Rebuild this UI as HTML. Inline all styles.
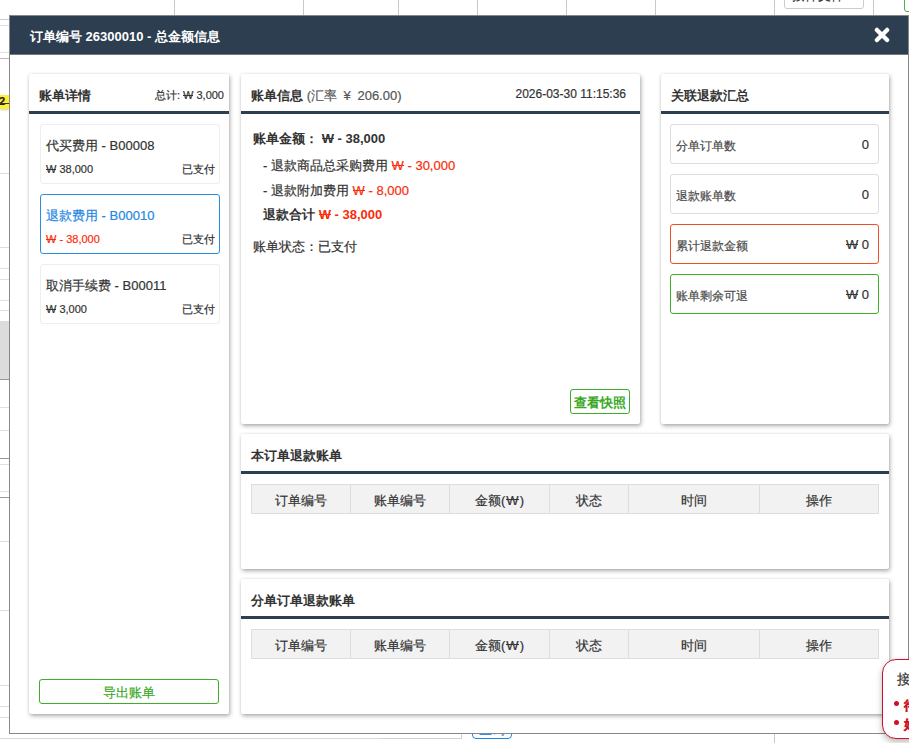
<!DOCTYPE html>
<html><head><meta charset="utf-8">
<style>
*{box-sizing:border-box;margin:0;padding:0}
html,body{width:909px;height:743px;overflow:hidden;background:#fff;font-family:"Liberation Sans",sans-serif;color:#333}
body{-webkit-text-stroke:0.2px currentColor}
b,#mtitle,.ctitle,.bold{-webkit-text-stroke:0}
.ctitle span{-webkit-text-stroke:0.2px currentColor}
.abs{position:absolute}
.vl{position:absolute;top:0;width:1px;background:#c8c8c8}
.hl{position:absolute;left:0;height:1px;background:#d8d8d8}
#modal{position:absolute;left:9px;top:15px;width:900px;height:719px;border:1px solid #888;background:#fff}
#mhead{position:absolute;left:0;top:0;width:898px;height:39px;background:#2c3e50;border-bottom:1px solid #777}
#mtitle{position:absolute;left:20px;top:13px;font-size:13px;font-weight:bold;color:#fff;line-height:16px;white-space:nowrap}
.card{position:absolute;background:#fff;border-radius:2px;box-shadow:1px 2px 4px rgba(0,0,0,.32),0 0 3px rgba(0,0,0,.08)}
.chead{position:absolute;left:0;top:0;right:0;height:40px;border-bottom:3px solid #2c3e50}
.ctitle{position:absolute;left:10px;top:14px;font-size:13px;font-weight:bold;color:#333;line-height:16px;white-space:nowrap}
.item{position:absolute;left:11px;width:180px;height:60px;border:1px solid #eee;border-radius:3px}
.item .n{position:absolute;left:5px;top:13px;font-size:13px;line-height:16px;color:#333;white-space:nowrap}
.item .a{position:absolute;left:5px;top:37px;font-size:11px;line-height:14px;color:#333;white-space:nowrap}
.item .s{position:absolute;right:4px;top:37px;font-size:11px;line-height:14px;color:#333;white-space:nowrap}
.item.sel{border-color:#2b8de0}
.item.sel .n{color:#1e86e3}
.item.sel .a{color:#fa2c0a}
.red{color:#fa2c0a}
.w{background:linear-gradient(currentColor,currentColor) no-repeat 0 0.5em/100% 1px}
.box{position:absolute;left:9px;width:209px;height:40px;border:1px solid #ddd;border-radius:3px}
.box .l{position:absolute;left:5px;top:14px;font-size:12px;line-height:15px;color:#4a4a4a;white-space:nowrap}
.box .v{position:absolute;right:9px;top:12px;font-size:13px;line-height:15px;color:#333;white-space:nowrap}
table{border-collapse:collapse;position:absolute;left:10px;top:50px;width:628px}
th .w{margin:0 1px}
th{background:#f2f2f2;border:1px solid #ddd;height:29px;padding:3px 0 0;font-size:13px;font-weight:normal;color:#333}
</style></head><body>
<!-- background page -->
<div class="vl" style="left:174px;height:15px"></div>
<div class="vl" style="left:303px;height:15px"></div>
<div class="vl" style="left:398px;height:15px"></div>
<div class="vl" style="left:477px;height:15px"></div>
<div class="vl" style="left:566px;height:15px"></div>
<div class="vl" style="left:655px;height:15px"></div>
<div class="vl" style="left:774px;height:15px"></div>
<div class="vl" style="left:873px;height:15px"></div>
<div class="abs" style="left:784px;top:-10px;width:80px;height:19px;border:1px solid #ccc;border-radius:3px;text-align:left;padding-left:7px;font-size:13px;line-height:9px;color:#333;overflow:hidden">按件文件</div>
<div class="abs" style="left:904px;top:-10px;width:20px;height:22px;border:1px solid #4caf50;border-radius:3px"></div>

<div class="hl" style="top:19px;width:9px;background:#ccc"></div>
<div class="hl" style="top:25px;width:9px;background:#e0e0e0"></div>
<div class="hl" style="top:52px;width:9px;background:#e0e0e0"></div>
<div class="hl" style="top:58px;width:9px;background:#bbb"></div>
<div class="hl" style="top:173px;width:9px;background:#ddd"></div>
<div class="hl" style="top:247px;width:9px;background:#ddd"></div>
<div class="hl" style="top:268px;width:9px;background:#e0e0e0"></div>
<div class="hl" style="top:279px;width:9px;background:#e0e0e0"></div>
<div class="hl" style="top:300px;width:9px;background:#e0e0e0"></div>
<div class="hl" style="top:310px;width:9px;background:#e0e0e0"></div>
<div class="hl" style="top:407px;width:9px;background:#e0e0e0"></div>
<div class="hl" style="top:430px;width:9px;background:#e0e0e0"></div>
<div class="hl" style="top:458px;width:9px;background:#999"></div>
<div class="hl" style="top:464px;width:9px;background:#e0e0e0"></div>
<div class="hl" style="top:491px;width:9px;background:#e0e0e0"></div>
<div class="hl" style="top:497px;width:9px;background:#999"></div>
<div class="hl" style="top:541px;width:9px;background:#ddd"></div>
<div class="hl" style="top:610px;width:9px;background:#ddd"></div>
<div class="hl" style="top:685px;width:9px;background:#ddd"></div>
<div class="hl" style="top:706px;width:9px;background:#ddd"></div>
<div class="hl" style="top:717px;width:9px;background:#ddd"></div>
<div class="abs" style="left:0;top:321px;width:9px;height:59px;background:#dcdcdc;border-bottom:1px solid #999"></div>
<div class="abs" style="left:0;top:95px;width:9px;height:14px;background:#ffee33;box-shadow:0 1px 2px rgba(0,0,0,.2)"></div>
<div class="abs" style="left:-1px;top:94px;font-size:11px;font-weight:bold;line-height:14px;color:#222">2</div>
<div class="hl" style="top:103px;width:9px;background:#333"></div>
<div class="hl" style="top:738px;width:462px;background:#d8d8d8"></div>
<div class="abs" style="left:380px;top:720px;width:82px;height:19px;border:1px solid #d0d0d0;border-left:none;border-top:none"></div>
<div class="abs" style="left:472px;top:715px;width:40px;height:24px;border:1px solid #1e88e5;border-radius:4px;text-align:center;font-size:13px;line-height:27px;color:#1e88e5;overflow:hidden">查询</div>
<div class="vl" style="left:774px;top:734px;height:9px"></div>
<div id="modal">
  <div id="mhead"><div id="mtitle">订单编号 26300010 - 总金额信息</div>
    <svg class="abs" style="left:864px;top:11px" width="16" height="16" viewBox="0 0 16 16"><path d="M2.9 2.9L13.1 13.1M13.1 2.9L2.9 13.1" stroke="#fff" stroke-width="4.3" stroke-linecap="round"/></svg>
  </div>

  <!-- left card -->
  <div class="card" style="left:19px;top:58px;width:200px;height:640px">
    <div class="chead"><div class="ctitle">账单详情</div><div class="abs" style="right:5px;top:15px;font-size:11px;line-height:13px;color:#333;white-space:nowrap">总计: <span class="w">W</span> 3,000</div></div>
    <div class="item" style="top:50px"><div class="n">代买费用 - B00008</div><div class="a"><span class="w">W</span> 38,000</div><div class="s">已支付</div></div>
    <div class="item sel" style="top:120px"><div class="n">退款费用 - B00010</div><div class="a"><span class="w">W</span> - 38,000</div><div class="s">已支付</div></div>
    <div class="item" style="top:190px"><div class="n">取消手续费 - B00011</div><div class="a"><span class="w">W</span> 3,000</div><div class="s">已支付</div></div>
    <div class="abs" style="left:10px;top:605px;width:180px;height:25px;border:1px solid #3dae28;border-radius:3px;text-align:center;font-size:13px;line-height:25px;color:#3aa824">导出账单</div>
  </div>

  <!-- middle card -->
  <div class="card" style="left:231px;top:58px;width:399px;height:350px">
    <div class="chead"><div class="ctitle">账单信息 <span style="font-weight:normal;color:#555">(汇率 <span style="margin:0 3px">¥</span> 206.00)</span></div><div class="abs" style="right:14px;top:13px;font-size:12px;line-height:15px;color:#333;white-space:nowrap">2026-03-30 11:15:36</div></div>
    <div class="abs" style="left:12px;top:57px;font-size:13px;line-height:16px;white-space:nowrap"><b>账单金额： <span class="w">W</span> - 38,000</b></div>
    <div class="abs" style="left:22px;top:84px;font-size:13px;line-height:16px;white-space:nowrap">- 退款商品总采购费用 <span class="red"><span class="w">W</span> - 30,000</span></div>
    <div class="abs" style="left:22px;top:109px;font-size:13px;line-height:16px;white-space:nowrap">- 退款附加费用 <span class="red"><span class="w">W</span> - 8,000</span></div>
    <div class="abs" style="left:22px;top:133px;font-size:13px;line-height:16px;white-space:nowrap"><b>退款合计 <span class="red"><span class="w">W</span> - 38,000</span></b></div>
    <div class="abs" style="left:12px;top:165px;font-size:13px;line-height:16px;white-space:nowrap">账单状态：已支付</div>
    <div class="abs" style="left:329px;top:315px;width:60px;height:25px;border:1px solid #3dae28;border-radius:3px;text-align:center;font-size:13px;font-weight:600;line-height:25px;color:#3aa824;-webkit-text-stroke:0">查看快照</div>
  </div>

  <!-- right card -->
  <div class="card" style="left:651px;top:58px;width:228px;height:350px">
    <div class="chead"><div class="ctitle">关联退款汇总</div></div>
    <div class="box" style="top:50px"><div class="l">分单订单数</div><div class="v">0</div></div>
    <div class="box" style="top:100px"><div class="l">退款账单数</div><div class="v">0</div></div>
    <div class="box" style="top:150px;border-color:#f04e28"><div class="l">累计退款金额</div><div class="v"><span class="w">W</span> 0</div></div>
    <div class="box" style="top:200px;border-color:#3dae28"><div class="l">账单剩余可退</div><div class="v"><span class="w">W</span> 0</div></div>
  </div>

  <!-- bottom cards -->
  <div class="card" style="left:231px;top:418px;width:648px;height:135px">
    <div class="chead"><div class="ctitle">本订单退款账单</div></div>
    <table><tr><th style="width:99px">订单编号</th><th style="width:99px">账单编号</th><th style="width:100px">金额(<span class="w">W</span>)</th><th style="width:79px">状态</th><th style="width:131px">时间</th><th>操作</th></tr></table>
  </div>
  <div class="card" style="left:231px;top:563px;width:648px;height:135px">
    <div class="chead"><div class="ctitle">分单订单退款账单</div></div>
    <table><tr><th style="width:99px">订单编号</th><th style="width:99px">账单编号</th><th style="width:100px">金额(<span class="w">W</span>)</th><th style="width:79px">状态</th><th style="width:131px">时间</th><th>操作</th></tr></table>
  </div>
</div>

<!-- popup right bottom -->
<div class="abs" style="left:882px;top:659px;width:60px;height:80px;border:1px solid #d0102a;border-radius:14px;background:#fff;box-shadow:0 3px 6px rgba(0,0,0,.28)">
  <div class="abs" style="left:14px;top:11px;font-size:14px;line-height:16px;color:#333">接</div>
  <div class="abs" style="left:11px;top:41px;width:5px;height:5px;border-radius:50%;background:#d0102a"></div>
  <div class="abs" style="left:11px;top:60px;width:5px;height:5px;border-radius:50%;background:#d0102a"></div>
  <div class="abs" style="left:21px;top:36px;font-size:13px;font-weight:bold;line-height:19px;color:#d0102a">待<br>好</div>
</div>
</body></html>
